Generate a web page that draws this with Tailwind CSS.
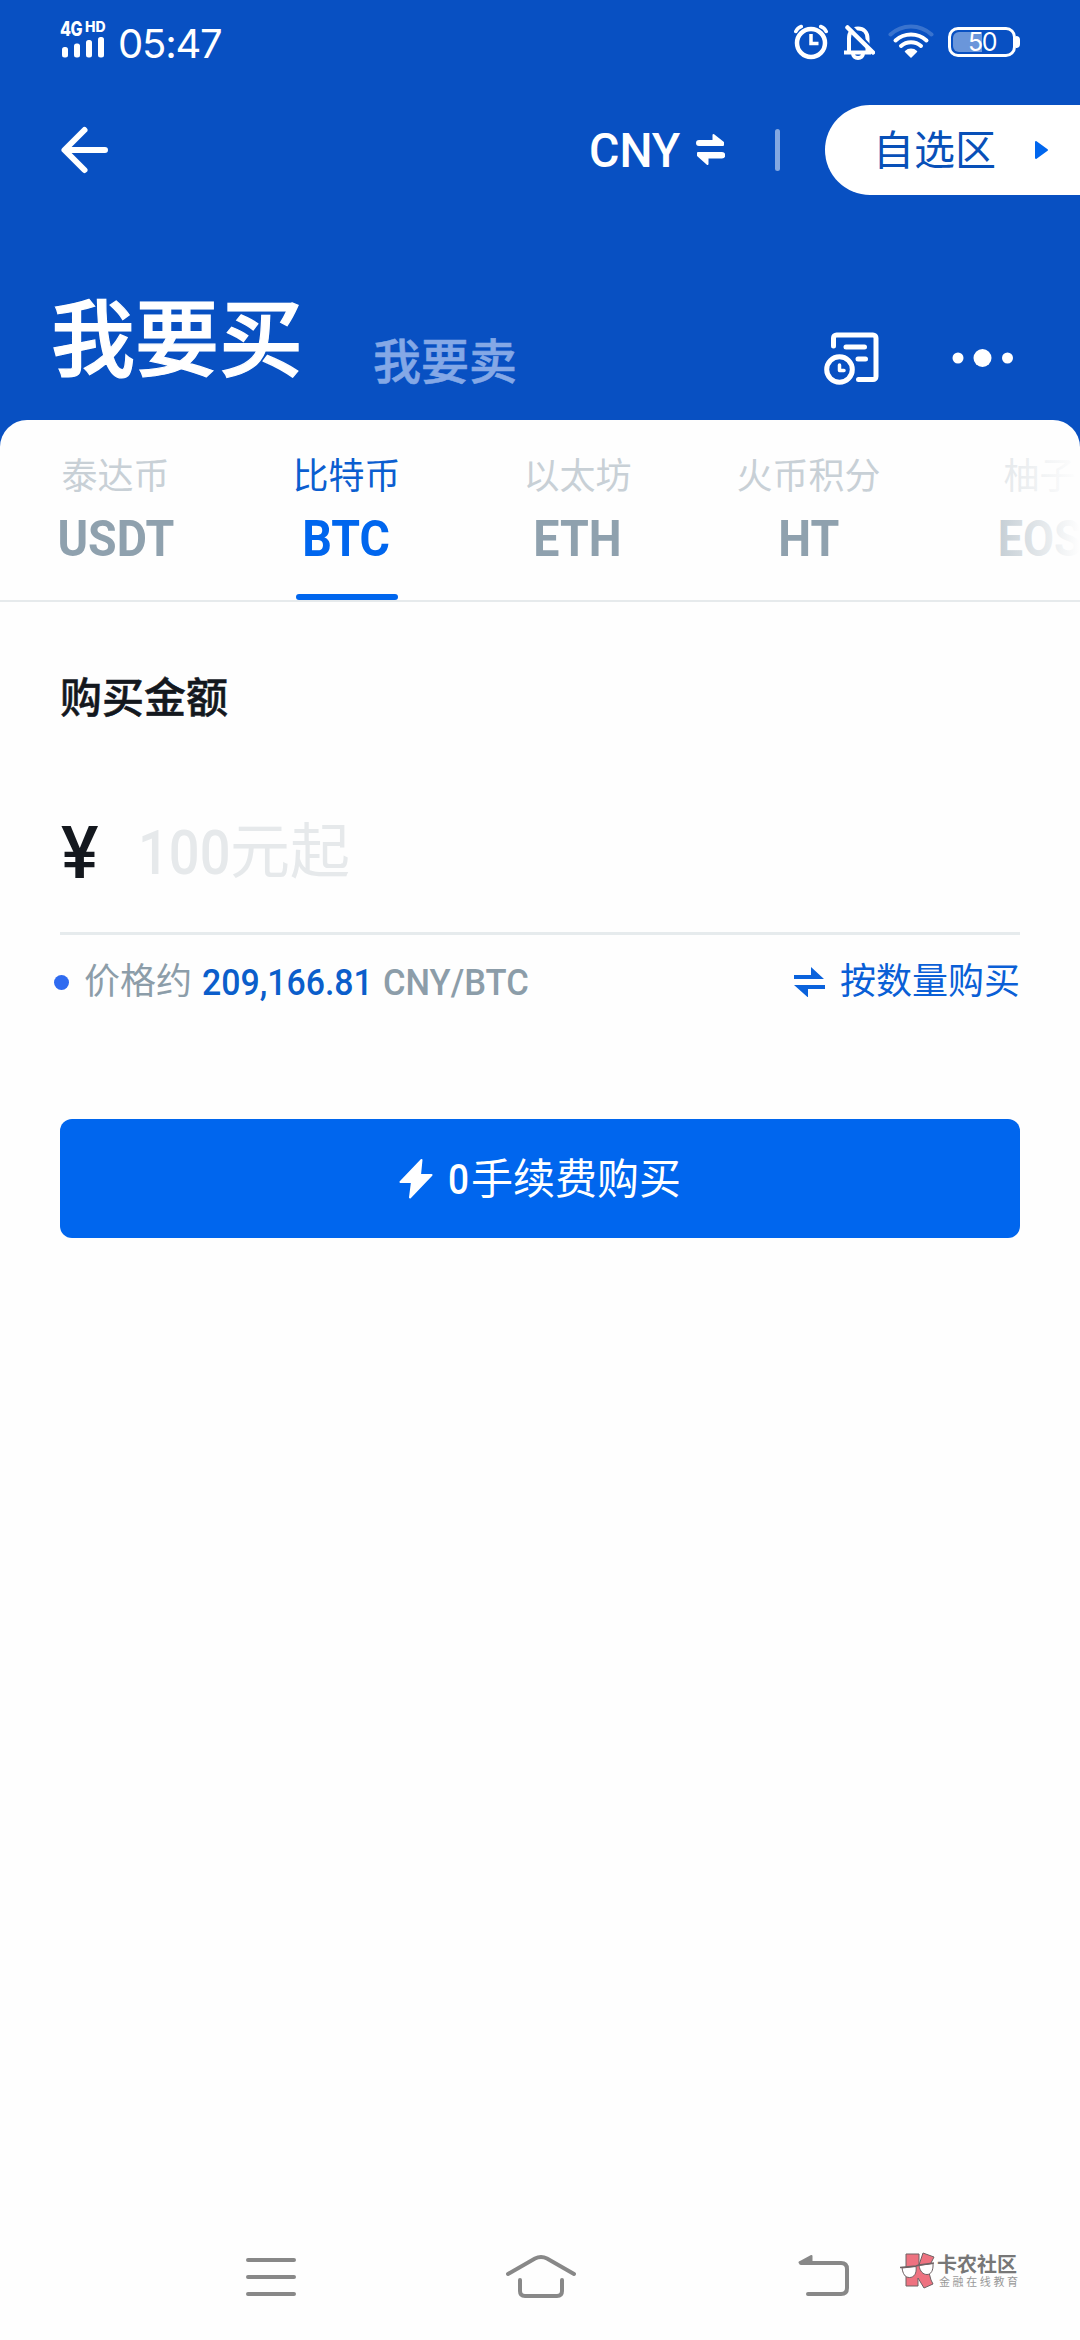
<!DOCTYPE html>
<html lang="zh-CN">
<head>
    <meta charset="UTF-8">
    <meta name="viewport" content="width=device-width, initial-scale=1.0">
    <title>我要买</title>
    <script src="https://cdn.jsdelivr.net/npm/@tailwindcss/browser@4"></script>
    <style>
        body {
            font-family: Roboto, 'Noto Sans CJK SC', sans-serif;
        }
    </style>
</head>
<body class="bg-[#fefefe]">
<div class="flex h-[2340px] w-[1080px] flex-col overflow-hidden bg-[#0850c2]">

    <!-- Status bar -->
    <div class="flex h-[84px] items-start justify-between pl-[60px] pr-[60px] pt-[20px] text-white">
        <div class="flex items-start">
            <div class="w-[58px]">
                <div class="flex h-[17px] items-start font-[Inter] font-extrabold">
                    <span class="w-[25px] origin-left scale-x-80 text-[20px] leading-[19px] tracking-tight">4G</span>
                    <span class="text-[14px] leading-[13px]">HD</span>
                </div>
                <svg class="ml-[2px]" width="44" height="21" viewBox="0 0 44 21" fill="currentColor">
                    <rect x="0" y="10" width="6" height="10.500" rx="2.500"/>
                    <rect x="12" y="6.500" width="6" height="14" rx="2.500"/>
                    <rect x="24" y="3" width="6" height="17.500" rx="2.500"/>
                    <rect x="36" y="0" width="6" height="20.500" rx="2.500"/>
                </svg>
            </div>
            <div class="pt-[4px] font-[Inter] text-[40px] leading-[40px] tracking-[-1.2px]">05:47</div>
        </div>
        <div class="flex pt-[4px]">
            <!-- alarm -->
            <svg class="mr-[16px]" width="34" height="36" viewBox="0 0 34 36" fill="none" stroke="currentColor" stroke-linecap="round">
                <circle cx="17" cy="19" r="14" stroke-width="4.500"/>
                <path d="M17 10v9.500h7.500" stroke-width="3.500" stroke-linecap="butt"/>
                <path d="M1.800 7.500a9 9 0 0 1 5.500-5M32.200 7.500a9 9 0 0 0-5.500-5" stroke-width="3.500"/>
            </svg>
            <!-- bell off -->
            <svg class="mr-[13px]" width="31" height="36" viewBox="0 0 31 36" fill="none" stroke="currentColor">
                <path d="M5 27V14.500C5 8 8.500 4.500 14 4.500S23.500 8 23.500 14.500V27M0 28.500h27" stroke-width="4"/>
                <path d="M9 29.500a5 4.500 0 0 0 10 0" stroke-width="4"/>
                <path d="M6 1L31 27.500" stroke="#0850c2" stroke-width="3"/>
                <path d="M3.500 3.500L29 28.500" stroke-width="4.500" stroke-linecap="round"/>
            </svg>
            <!-- wifi -->
            <svg class="mr-[14px]" width="46" height="36" viewBox="0 0 46 36" fill="none" stroke="currentColor" stroke-width="4" stroke-linecap="round">
                <path d="M2.500 10.500a30 30 0 0 1 41 0" opacity=".2"/>
                <path d="M7.500 16.500a23 23 0 0 1 31 0"/>
                <path d="M13 22a15 15 0 0 1 20 0"/>
                <path d="M17.500 27.500a8 8 0 0 1 11 0L23 33z" fill="currentColor" stroke-width="1.500" stroke-linejoin="round"/>
            </svg>
            <!-- battery -->
            <div class="flex pt-[3px]">
                <div class="relative h-[30px] w-[68px] rounded-[10px] border-3 border-white">
                    <div class="absolute left-[2px] top-[2px] h-[20px] w-[29px] rounded-l-[6px] bg-white/40"></div>
                    <div class="absolute inset-0 text-center font-[Inter] text-[25px] leading-[25px] tracking-[-1.5px]">50</div>
                </div>
                <div class="mt-[9px] h-[12px] w-[4px] rounded-r-[4px] bg-white"></div>
            </div>
        </div>
    </div>

    <!-- Top bar -->
    <div class="flex h-[132px] items-center pl-[60px] text-white">
        <svg width="50" height="50" viewBox="0 0 50 50" fill="none" stroke="currentColor" stroke-width="6" stroke-linecap="round" stroke-linejoin="round">
            <path d="M24.500 5L4.500 25l20 20M5 25h40"/>
        </svg>
        <span class="ml-[479px] w-[107px] origin-left scale-x-95 whitespace-nowrap pt-[2px] text-[49px] leading-[60px] font-medium">CNY</span>
        <svg width="29" height="34" viewBox="0 0 29 34" fill="currentColor" stroke="currentColor" stroke-width="2" stroke-linejoin="round">
            <path d="M3 8h14.500V2L27 9.500V12H3a2 2 0 0 1 0-4zM26 20H2v2.500L11.500 31v-6.500H26a2 2 0 0 0 0-4.500z"/>
        </svg>
        <div class="ml-[50px] h-[42px] w-[5px] rounded-full bg-white/50"></div>
        <div class="ml-[45px] flex h-[90px] flex-1 items-center rounded-l-full bg-white pl-[48px] text-[#0850b8]">
            <span class="pt-[2px] text-[41px] leading-[60px]">自选区</span>
            <svg class="ml-[38px]" width="15" height="20" viewBox="0 0 15 20" fill="#0066ee" stroke="#0066ee" stroke-width="2" stroke-linejoin="round">
                <path d="M2 2l11 8-11 8z"/>
            </svg>
        </div>
    </div>

    <!-- Buy / sell switch -->
    <div class="flex h-[204px] items-start pl-[51px] text-white">
        <h1 class="mt-[66px] text-[84px] leading-[120px] font-medium [-webkit-text-stroke:1.2px]">我要买</h1>
        <span class="mt-[112px] ml-[70px] text-[48px] leading-[70px] font-medium text-[#84a8e6] [-webkit-text-stroke:0.6px]">我要卖</span>
        <svg class="ml-[307px] mt-[115px]" width="56" height="56" viewBox="0 0 56 56" fill="none" stroke="currentColor" stroke-width="5" stroke-linecap="round" stroke-linejoin="round">
            <path d="M9.500 15V7a3 3 0 0 1 3-3H49a3 3 0 0 1 3 3v38.500a3 3 0 0 1-3 3H34.500M22 16h18.500M34 28h7.500"/>
            <circle cx="15.500" cy="38.500" r="12.800"/>
            <path d="M15.500 34v5.500h4.500" stroke-width="3.500"/>
        </svg>
        <svg class="ml-[72px] mt-[132px]" width="62" height="20" viewBox="0 0 62 20" fill="currentColor">
            <circle cx="6" cy="10" r="5.500"/><circle cx="30.500" cy="10" r="9"/><circle cx="55.500" cy="10" r="5.500"/>
        </svg>
    </div>

    <!-- Content sheet -->
    <main class="flex flex-1 flex-col rounded-t-[27px] bg-[#fefefe]">

        <!-- Coin tabs -->
        <div class="relative flex h-[182px] overflow-hidden border-b-2 border-[#e6eaec] text-center text-[#c8d0d6]">
            <div class="flex w-[231px] shrink-0 flex-col items-center pt-[35px]">
                <span class="text-[36px] leading-[44px]">泰达币</span>
                <span class="mt-[10px] scale-x-93 text-[50px] leading-[60px] font-bold text-[#8fa1ae]">USDT</span>
            </div>
            <div class="flex w-[231px] shrink-0 flex-col items-center pt-[35px] text-[#0066ee]">
                <span class="text-[36px] leading-[44px] text-[#0b5ed0]">比特币</span>
                <span class="mt-[10px] scale-x-93 text-[50px] leading-[60px] font-bold">BTC</span>
                <span class="mt-auto h-[6px] w-[102px] rounded-full bg-[#0066ee]"></span>
            </div>
            <div class="flex w-[231px] shrink-0 flex-col items-center pt-[35px]">
                <span class="text-[36px] leading-[44px]">以太坊</span>
                <span class="mt-[10px] scale-x-93 text-[50px] leading-[60px] font-bold text-[#8fa1ae]">ETH</span>
            </div>
            <div class="flex w-[231px] shrink-0 flex-col items-center pt-[35px]">
                <span class="text-[36px] leading-[44px]">火币积分</span>
                <span class="mt-[10px] scale-x-93 text-[50px] leading-[60px] font-bold text-[#8fa1ae]">HT</span>
            </div>
            <div class="flex w-[231px] shrink-0 flex-col items-center pt-[35px]">
                <span class="text-[36px] leading-[44px]">柚子</span>
                <span class="mt-[10px] scale-x-90 text-[50px] leading-[60px] font-bold text-[#8fa1ae]">EOS</span>
            </div>
            <div class="absolute right-0 top-[30px] h-[140px] w-[160px] bg-linear-to-r from-[#fefefe]/0 to-[#fefefe]"></div>
        </div>

        <!-- Amount -->
        <section class="px-[60px] pt-[67px]">
            <h2 class="text-[42px] leading-[60px] font-medium text-[#14181e] [-webkit-text-stroke:0.5px]">购买金额</h2>
            <div class="mt-[62px] flex h-[144px] items-start border-b-3 border-[#e6ebed]">
                <span class="w-[78px] pl-px pt-[13px] text-[72px] leading-[100px] font-medium text-[#14181e]"><span class="inline-block origin-left scale-x-98">¥</span></span>
                <span class="flex pt-[22px] text-[60px] leading-[80px] text-[#e6e9eb]">
                    <span class="w-[92px] origin-left scale-x-89 text-[61px] font-medium">100</span>
                    <span>元起</span>
                </span>
            </div>
            <div class="-ml-[6px] flex h-[94px] items-center text-[36px] leading-[50px]">
                <span class="h-[15px] w-[15px] rounded-full bg-[#2f6bf0]"></span>
                <span class="ml-[15px] text-[#8c9da9]">价格约</span>
                <span class="ml-[10px] w-[181px] origin-left scale-x-94 pt-[2px] font-medium text-[#0b5ecb]">209,166.81</span>
                <span class="origin-left scale-x-96 pt-[2px] font-medium text-[#8c9da9]">CNY/BTC</span>
                <svg class="ml-auto mr-[15px]" width="31" height="30" viewBox="0 0 31 30" fill="#0a62dc">
                    <path d="M0 8h17V0l13 12H0zM31 18H0l14 12.500V22h17z"/>
                </svg>
                <span class="text-[#0a5fd6]">按数量购买</span>
            </div>
            <button class="mt-[90px] flex h-[119px] w-full items-center justify-center rounded-[12px] bg-[#0066ee] text-[42px] leading-[60px] text-white">
                <svg class="mr-[15px]" width="34" height="40" viewBox="0 0 34 40" fill="currentColor" stroke="currentColor" stroke-width="2" stroke-linejoin="round">
                    <path d="M22.500 1L1.500 23H13l-2 15.500L32.500 16H21z"/>
                </svg>
                <span class="w-[23px] origin-left scale-x-88 pt-[3px] text-left font-medium">0</span><span class="pt-[2px]">手续费购买</span>
            </button>
        </section>

        <!-- System navigation -->
        <nav class="mt-auto flex h-[90px] items-start pl-[245px] text-[#888888]">
            <svg width="52" height="56" viewBox="0 0 52 56" fill="none" stroke="currentColor" stroke-width="4" stroke-linecap="round">
                <path d="M3 10h46M3 27h46M3 44h46"/>
            </svg>
            <svg class="ml-[208px]" width="72" height="56" viewBox="0 0 72 56" fill="none" stroke="currentColor" stroke-width="4" stroke-linecap="round">
                <path d="M3 24L30 8.500q6-3 12 0L69 24M15 30v11q0 5 5 5h32q5 0 5-5V30"/>
            </svg>
            <svg class="ml-[220px]" width="54" height="56" viewBox="0 0 54 56" fill="none" stroke="currentColor" stroke-width="4" stroke-linecap="round">
                <path d="M4 13h40q6 0 6 6v19q0 6-6 6H11"/>
                <path d="M2.500 12.500L14.500 6v7z" fill="currentColor" stroke-width="2" stroke-linejoin="round"/>
            </svg>
            <!-- community logo -->
            <div class="ml-[49px] flex">
                <svg width="36" height="44" viewBox="0 0 36 44" stroke="#6f6264" stroke-width="1" stroke-linejoin="round">
                    <path d="M6 4h13v11l4-12 11 4-6 12 3 11 2 4-9 4-6-10v8H6z" fill="#ee7280"/>
                    <path d="M2 18l14-1.500c1 7-2 11-6.500 11S3 24 2 18zM19 15.500l14-2c.500 7-2 11-6 11s-7-3-8-9z" fill="#fff"/>
                    <path d="M0 17.500l16-1.500 3-1 15-2" fill="none" stroke-width="1.500"/>
                </svg>
                <div class="ml-[1px] flex flex-col pt-[5px]">
                    <span class="text-[20px] leading-[20px] font-bold text-[#777777]">卡农社区</span>
                    <span class="mt-[1px] ml-[2px] text-[11px] leading-[14px] tracking-[2.600px] text-[#999999]">金融在线教育</span>
                </div>
            </div>
        </nav>
    </main>
</div>
</body>
</html>
